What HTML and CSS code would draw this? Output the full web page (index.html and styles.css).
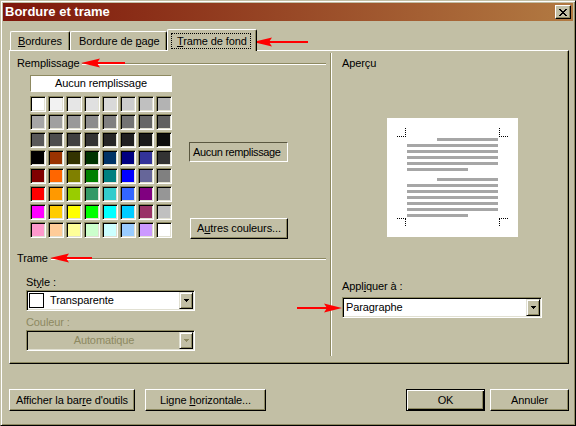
FILE: index.html
```html
<!DOCTYPE html>
<html lang="fr">
<head>
<meta charset="utf-8">
<title>Bordure et trame</title>
<link rel="stylesheet" href="styles.css">
</head>
<body>
<div class="window">
  <div class="titlebar">
    <span class="title">Bordure et trame</span>
    <span class="close">
      <svg width="8" height="7" viewBox="0 0 8 7" shape-rendering="crispEdges">
        <g fill="#000">
          <rect x="0" y="0" width="2" height="1"/><rect x="6" y="0" width="2" height="1"/>
          <rect x="1" y="1" width="2" height="1"/><rect x="5" y="1" width="2" height="1"/>
          <rect x="2" y="2" width="4" height="1"/>
          <rect x="3" y="3" width="2" height="1"/>
          <rect x="2" y="4" width="4" height="1"/>
          <rect x="1" y="5" width="2" height="1"/><rect x="5" y="5" width="2" height="1"/>
          <rect x="0" y="6" width="2" height="1"/><rect x="6" y="6" width="2" height="1"/>
        </g>
      </svg>
    </span>
  </div>
  <div class="client">
    <div class="tabs">
      <div class="tab t1"><u>B</u>ordures</div>
      <div class="tab t2">Bordure de <u>p</u>age</div>
      <div class="tab t3"><span class="focus"><u>T</u>rame de fond</span></div>
    </div>
    <div class="panel">
      <div class="left">
        <div class="ghead"><span>Remplissage</span><span class="gline"></span></div>
        <div class="fill">
          <div class="palette">
            <div class="nonebox">Aucun remplissage</div>
            <div class="grid">
              <div class="cell" style="background:#ffffff"></div>
              <div class="cell" style="background:#f2f2f2"></div>
              <div class="cell" style="background:#e6e6e6"></div>
              <div class="cell" style="background:#e0e0e0"></div>
              <div class="cell" style="background:#d9d9d9"></div>
              <div class="cell" style="background:#cccccc"></div>
              <div class="cell" style="background:#c0c0c0"></div>
              <div class="cell" style="background:#b3b3b3"></div>

              <div class="cell" style="background:#a6a6a6"></div>
              <div class="cell" style="background:#a0a0a0"></div>
              <div class="cell" style="background:#999999"></div>
              <div class="cell" style="background:#8c8c8c"></div>
              <div class="cell" style="background:#808080"></div>
              <div class="cell" style="background:#737373"></div>
              <div class="cell" style="background:#666666"></div>
              <div class="cell" style="background:#606060"></div>

              <div class="cell" style="background:#595959"></div>
              <div class="cell" style="background:#4d4d4d"></div>
              <div class="cell" style="background:#404040"></div>
              <div class="cell" style="background:#333333"></div>
              <div class="cell" style="background:#262626"></div>
              <div class="cell" style="background:#202020"></div>
              <div class="cell" style="background:#1a1a1a"></div>
              <div class="cell" style="background:#0d0d0d"></div>

              <div class="cell" style="background:#000000"></div>
              <div class="cell" style="background:#993300"></div>
              <div class="cell" style="background:#333300"></div>
              <div class="cell" style="background:#003300"></div>
              <div class="cell" style="background:#003366"></div>
              <div class="cell" style="background:#000080"></div>
              <div class="cell" style="background:#333399"></div>
              <div class="cell" style="background:#333333"></div>

              <div class="cell" style="background:#800000"></div>
              <div class="cell" style="background:#ff6600"></div>
              <div class="cell" style="background:#808000"></div>
              <div class="cell" style="background:#008000"></div>
              <div class="cell" style="background:#008080"></div>
              <div class="cell" style="background:#0000ff"></div>
              <div class="cell" style="background:#666699"></div>
              <div class="cell" style="background:#808080"></div>

              <div class="cell" style="background:#ff0000"></div>
              <div class="cell" style="background:#ff9900"></div>
              <div class="cell" style="background:#99cc00"></div>
              <div class="cell" style="background:#339966"></div>
              <div class="cell" style="background:#33cccc"></div>
              <div class="cell" style="background:#3366ff"></div>
              <div class="cell" style="background:#800080"></div>
              <div class="cell" style="background:#969696"></div>

              <div class="cell" style="background:#ff00ff"></div>
              <div class="cell" style="background:#ffcc00"></div>
              <div class="cell" style="background:#ffff00"></div>
              <div class="cell" style="background:#00ff00"></div>
              <div class="cell" style="background:#00ffff"></div>
              <div class="cell" style="background:#00ccff"></div>
              <div class="cell" style="background:#993366"></div>
              <div class="cell" style="background:#c0c0c0"></div>

              <div class="cell" style="background:#ff99cc"></div>
              <div class="cell" style="background:#ffcc99"></div>
              <div class="cell" style="background:#ffff99"></div>
              <div class="cell" style="background:#ccffcc"></div>
              <div class="cell" style="background:#ccffff"></div>
              <div class="cell" style="background:#99ccff"></div>
              <div class="cell" style="background:#cc99ff"></div>
              <div class="cell" style="background:#ffffff"></div>
            </div>
          </div>
          <div class="fillside">
            <div class="status">Aucun remplissage</div>
            <div class="btn more"><span>A<u>u</u>tres couleurs...</span></div>
          </div>
        </div>
        <div class="ghead trame"><span>Trame</span><span class="gline"></span></div>
        <div class="fields">
          <div class="lbl style-lbl">St<u>y</u>le :</div>
          <div class="combo c1">
            <span class="swatch"></span>
            <span class="ctext">Transparente</span>
            <span class="dd"><svg width="5" height="3" viewBox="0 0 5 3" shape-rendering="crispEdges"><g fill="#000"><rect x="0" y="0" width="5" height="1"/><rect x="1" y="1" width="3" height="1"/><rect x="2" y="2" width="1" height="1"/></g></svg></span>
          </div>
          <div class="lbl dis-lbl">Couleur :</div>
          <div class="combo c2 disabled">
            <span class="ctext center">Automatique</span>
            <span class="dd"><svg width="5" height="3" viewBox="0 0 5 3" shape-rendering="crispEdges"><g fill="#8d8961"><rect x="0" y="0" width="5" height="1"/><rect x="1" y="1" width="3" height="1"/><rect x="2" y="2" width="1" height="1"/></g></svg></span>
          </div>
        </div>
      </div>
      <div class="sep"></div>
      <div class="right">
        <div class="lbl">Aperçu</div>
        <div class="preview">
          <svg width="131" height="119" viewBox="0 0 131 119">
            <rect x="0" y="0" width="131" height="119" fill="#fff"/>
            <g fill="#a6a6a6">
              <rect x="50" y="20" width="61" height="3"/>
              <rect x="20" y="26" width="91" height="3"/>
              <rect x="20" y="32" width="91" height="3"/>
              <rect x="20" y="38" width="91" height="3"/>
              <rect x="20" y="44" width="91" height="3"/>
              <rect x="20" y="50" width="61" height="3"/>
              <rect x="50" y="60" width="61" height="3"/>
              <rect x="20" y="66" width="91" height="3"/>
              <rect x="20" y="72" width="91" height="3"/>
              <rect x="20" y="78" width="91" height="3"/>
              <rect x="20" y="84" width="91" height="3"/>
              <rect x="20" y="90" width="91" height="3"/>
              <rect x="20" y="96" width="61" height="3"/>
            </g>
            <g stroke="#000" stroke-width="1" stroke-dasharray="1 1" fill="none" shape-rendering="crispEdges">
              <path d="M10 18.5H19M18.5 10V18"/>
              <path d="M112 18.5H121M112.5 10V18"/>
              <path d="M10 100.5H19M18.5 101V109"/>
              <path d="M112 100.5H121M112.5 101V109"/>
            </g>
          </svg>
        </div>
        <div class="lbl apply">Appl<u>i</u>quer à :</div>
        <div class="combo c3">
          <span class="ctext">Paragraphe</span>
          <span class="dd"><svg width="5" height="3" viewBox="0 0 5 3" shape-rendering="crispEdges"><g fill="#000"><rect x="0" y="0" width="5" height="1"/><rect x="1" y="1" width="3" height="1"/><rect x="2" y="2" width="1" height="1"/></g></svg></span>
        </div>
      </div>
    </div>
    <div class="buttons">
      <div class="btn b1"><span>Afficher la bar<u>r</u>e d'outils</span></div>
      <div class="btn b2"><span>Ligne <u>h</u>orizontale...</span></div>
      <div class="btn ok"><span>OK</span></div>
      <div class="btn cancel"><span>Annuler</span></div>
    </div>
  </div>
  <svg class="arrows" width="576" height="426" viewBox="0 0 576 426">
    <g fill="#ff0000">
      <rect x="268" y="41" width="40" height="2"/>
      <polygon points="253,42 272,37.5 269,42 272,46.5"/>
      <rect x="96" y="62" width="29" height="2"/>
      <polygon points="81,63 100,58.5 97,63 100,67.5"/>
      <rect x="65" y="257" width="27" height="2"/>
      <polygon points="50,258 69,253.5 66,258 69,262.5"/>
      <rect x="297" y="307" width="31" height="2"/>
      <polygon points="342,308 324,303.5 327,308 324,312.5"/>
    </g>
  </svg>
</div>
</body>
</html>
```
FILE: styles.css
```css
* { box-sizing: border-box; }
html, body { margin: 0; padding: 0; }
body {
  width: 576px;
  height: 426px;
  overflow: hidden;
  background: #c2bfa5;
  font-family: "Liberation Sans", Arial, sans-serif;
  font-size: 11px;
  line-height: 13px;
  letter-spacing: -0.1px;
  color: #000;
}
u { text-decoration: underline; text-underline-offset: 1px; }

.window {
  position: relative;
  width: 576px;
  height: 426px;
  border: 1px solid;
  border-color: #c2bfa5 #000 #000 #c2bfa5;
  box-shadow: inset 1px 1px #fff, inset -1px -1px #8d8961;
  padding: 2px;
}

.titlebar {
  height: 18px;
  display: flex;
  align-items: center;
  justify-content: space-between;
  padding: 0 2px;
  background: linear-gradient(90deg, #7e160a, #b27a42);
}
.title {
  color: #fff;
  font-weight: bold;
  font-size: 13px;
  line-height: 16px;
  letter-spacing: 0;
}
.close {
  width: 16px;
  height: 14px;
  display: flex;
  align-items: center;
  justify-content: center;
  background: #c2bfa5;
  border: 1px solid;
  border-color: #fff #000 #000 #fff;
  box-shadow: inset -1px -1px #8d8961;
}
.close svg { display: block; }

.client { padding: 7px 4px 0 6px; }

.tabs {
  display: flex;
  align-items: flex-end;
  height: 22px;
  padding-left: 1px;
}
.tab {
  height: 19px;
  padding: 3px 0 0 7px;
  border-top: 1px solid #fff;
  border-left: 1px solid #fff;
  border-right: 1px solid #000;
  box-shadow: inset -1px 0 #8d8961;
  border-radius: 2px 2px 0 0;
  white-space: nowrap;
}
.t1 { width: 60px; }
.t2 { width: 97px; padding-left: 8px; }
.t3 {
  width: 90px;
  height: 22px;
  margin-bottom: -1px;
  padding: 3px 0 0 3px;
  position: relative;
  z-index: 2;
  background: #c2bfa5;
}
.focus {
  display: inline-block;
  border: 1px dotted #000;
  padding: 1px 3px 0 5px;
  line-height: 13px;
}

.panel {
  display: flex;
  height: 314px;
  border: 1px solid;
  border-color: #fff #000 #000 #fff;
  box-shadow: inset -1px -1px #8d8961;
}
.left { width: 320px; padding: 6px 4px 0 7px; }
.sep {
  width: 2px;
  margin: 2px 0 7px;
  border-left: 1px solid #8d8961;
  border-right: 1px solid #fff;
}
.right { flex: 1; padding: 6px 0 0 10px; }

.ghead { display: flex; align-items: flex-start; height: 13px; }
.gline {
  flex: 1;
  height: 2px;
  margin: 6px 0 0 3px;
  border-top: 1px solid #8d8961;
  border-bottom: 1px solid #fff;
}
.trame { margin-top: 13px; }

.fill { display: flex; margin-top: 5px; padding-left: 13px; }
.palette { width: 142px; }
.nonebox {
  height: 17px;
  background: #fff;
  border: 1px solid;
  border-color: #8d8961 #fff #fff #8d8961;
  text-align: center;
  line-height: 15px;
  white-space: nowrap;
}
.grid {
  display: grid;
  grid-template-columns: repeat(8, 16px);
  grid-auto-rows: 16px;
  gap: 2px;
  margin-top: 4px;
}
.cell {
  border: 1px solid;
  border-color: #8d8961 #fff #fff #8d8961;
  box-shadow: inset 1px 1px #000, inset -1px -1px #e1e0d2;
}
.fillside { margin-left: 17px; padding-top: 67px; }
.status {
  width: 99px;
  height: 20px;
  border: 1px solid;
  border-color: #5a5740 #fff #fff #5a5740;
  padding-left: 3px;
  line-height: 18px;
  letter-spacing: -0.35px;
  white-space: nowrap;
  overflow: hidden;
}

.btn {
  height: 22px;
  display: flex;
  align-items: center;
  justify-content: center;
  background: #c2bfa5;
  border: 1px solid;
  border-color: #fff #000 #000 #fff;
  box-shadow: inset -1px -1px #8d8961;
  white-space: nowrap;
}
.more { width: 98px; height: 21px; margin: 56px 0 0 1px; }

.fields { padding-left: 9px; }
.lbl { line-height: 13px; white-space: nowrap; }
.style-lbl { margin-top: 11px; }
.dis-lbl { margin-top: 5px; color: #8d8961; }

.combo {
  display: flex;
  align-items: center;
  height: 21px;
  background: #fff;
  border: 1px solid;
  border-color: #8d8961 #fff #fff #8d8961;
  box-shadow: inset 1px 1px #000, inset -1px -1px #e1e0d2;
  padding: 2px;
}
.c1 { width: 169px; margin-top: 1px; }
.c2 { width: 169px; margin-top: 1px; }
.c3 { width: 200px; margin-top: 4px; }
.combo.disabled { background: #c2bfa5; color: #8d8961; }
.swatch {
  width: 15px;
  height: 15px;
  border: 1px solid #000;
  background: #fff;
  flex: none;
}
.ctext { flex: 1; white-space: nowrap; margin-left: 6px; }
.c3 .ctext { margin-left: 1px; }
.ctext.center { text-align: center; margin-left: 0; }
.dd {
  flex: none;
  width: 14px;
  height: 17px;
  margin: -1px -1px -1px auto;
  display: flex;
  align-items: center;
  justify-content: center;
  background: #c2bfa5;
  border: 1px solid;
  border-color: #e1e0d2 #000 #000 #e1e0d2;
  box-shadow: inset 1px 1px #fff, inset -1px -1px #8d8961;
}
.dd svg { display: block; }

.preview { width: 131px; height: 119px; margin: 48px 0 0 45px; }
.preview svg { display: block; }
.apply { margin-top: 43px; }

.buttons { display: flex; margin-top: 25px; }
.b1 { width: 126px; }
.b2 { width: 121px; margin-left: 10px; }
.ok {
  width: 79px;
  margin-left: auto;
  border-color: #000;
  box-shadow: inset 1px 1px #fff, inset -1px -1px #000, inset -2px -2px #8d8961;
}
.cancel { width: 79px; margin-left: 5px; }

.arrows {
  position: absolute;
  left: -1px;
  top: -1px;
  pointer-events: none;
}
```
